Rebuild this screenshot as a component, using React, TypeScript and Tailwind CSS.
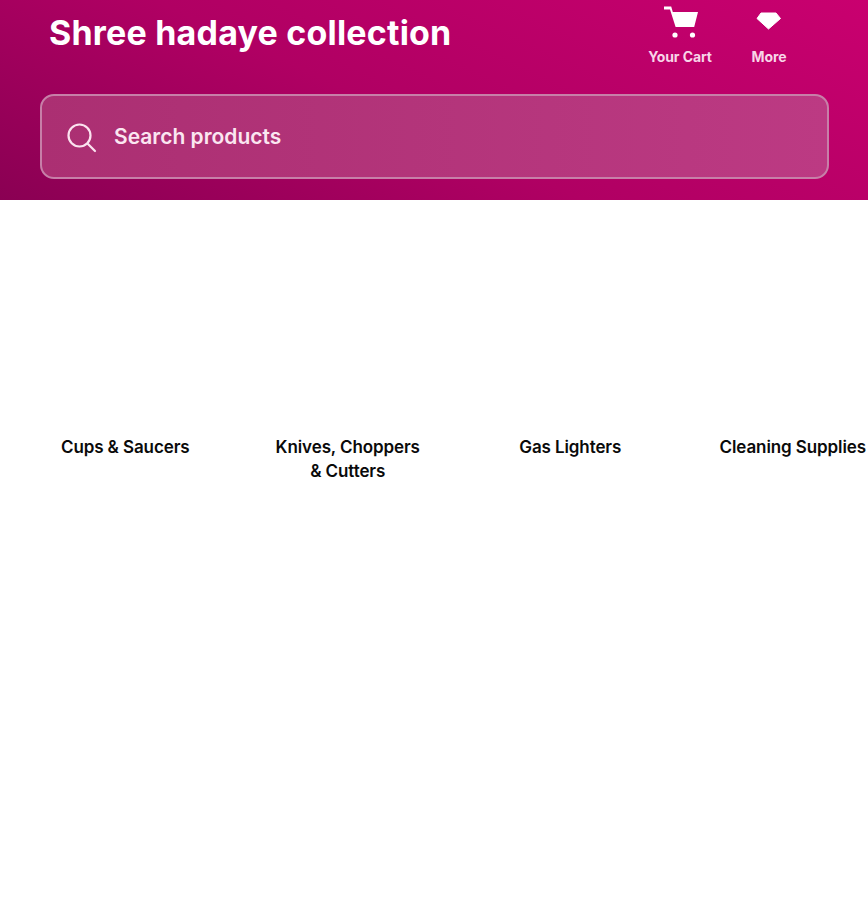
import React from "react";

const categories = ["Cups & Saucers", "Knives, Choppers & Cutters", "Gas Lighters", "Cleaning Supplies"];

export default function App() {
  return (
    <div className="w-[868px] h-[900px] overflow-hidden bg-white font-['Inter','Liberation_Sans',sans-serif]">
      <header className="h-[200px] bg-[linear-gradient(205deg,#c9006f_0%,#b00063_55%,#8a0053_100%)] pl-10 pr-[39px] flex flex-col">
        <div className="h-[94px] flex items-start justify-between">
          <h1 className="ml-[9px] mt-[13px] text-[34px] leading-10 font-bold tracking-[0.2px] text-white">Shree hadaye collection</h1>
          <div className="flex mr-[26px]">
            <div className="w-[110px] flex flex-col items-center text-[#f8d5e8]">
              <svg width="40" height="40" viewBox="0 0 40 40" className="mt-[2px] -mr-[1px]" fill="#fff">
                <path d="M3 4.5h7.2l1.6 5.5H37l-3.8 15H14.6L9 7.5H3z" />
                <circle cx="14" cy="33" r="2.6" />
                <circle cx="31.5" cy="33" r="2.6" />
              </svg>
              <span className="mt-[5px] text-sm leading-5 font-bold tracking-[-0.1px]">Your Cart</span>
            </div>
            <div className="w-[68px] flex flex-col items-center text-[#f8d5e8]">
              <svg width="26" height="18" viewBox="0 0 26 18" className="mt-[12px]" fill="#fff">
                <path d="M5 1h15l4.5 5.5L12.5 17 1 6.5z" strokeLinejoin="round" stroke="#fff" strokeWidth="1" />
              </svg>
              <span className="mt-[17px] text-sm leading-5 font-bold tracking-[-0.1px]">More</span>
            </div>
          </div>
        </div>
        <div className="h-[85px] flex items-center gap-[17px] rounded-[14px] border-2 border-[#c77fa8] bg-[linear-gradient(90deg,#ab2f72,#bc3a83)] pl-[23px]">
          <svg width="32" height="32" viewBox="0 0 32 32" fill="none" stroke="#fbe3ef" strokeWidth="2.2" strokeLinecap="round">
            <circle cx="14.5" cy="14.5" r="11" />
            <path d="M23 23l7 7" />
          </svg>
          <span className="text-[21px] leading-7 font-semibold text-[#fbe6f1]">Search products</span>
        </div>
      </header>
      <main className="flex pl-[14px] pt-[235px] w-[1000px]">
        {categories.map((c) => (
          <div key={c} className="w-[222.5px] shrink-0 px-8 text-center text-[17px] leading-6 font-semibold text-[#0a0a0a] tracking-[-0.1px]">
            <span className={c === "Cleaning Supplies" ? "whitespace-nowrap" : ""}>{c}</span>
          </div>
        ))}
      </main>
    </div>
  );
}
